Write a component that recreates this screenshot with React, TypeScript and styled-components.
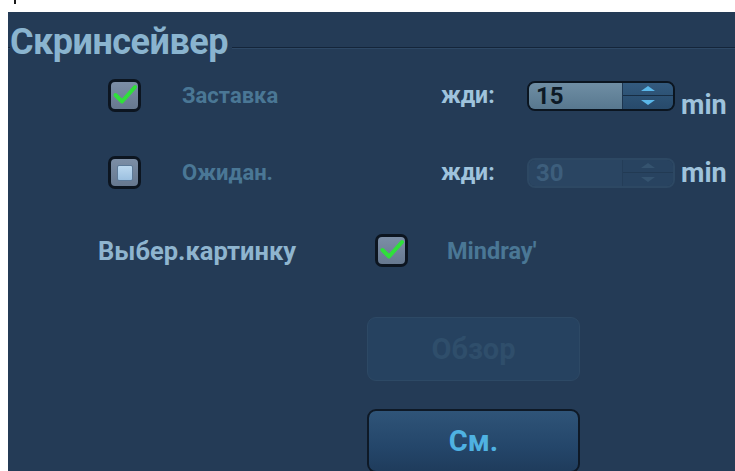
import React from "react";
import styled, { createGlobalStyle } from "styled-components";

const GlobalStyle = createGlobalStyle`
  html, body {
    margin: 0;
    padding: 0;
    background: #ffffff;
    overflow: hidden;
  }
  body {
    font-family: Roboto, "Liberation Sans", Arial, sans-serif;
  }
`;

const TopStrip = styled.div`
  height: 12px;
  padding-left: 14px;
`;

const Speck = styled.div`
  width: 2px;
  height: 4px;
  background: #1a1a1a;
`;

const Panel = styled.div`
  margin-left: 8px;
  height: 459px;
  background: #243b56;
  overflow: hidden;
  display: flex;
  flex-direction: column;
`;

const Header = styled.div`
  display: flex;
  align-items: flex-start;
  height: 34px;
  margin-top: 13px;
`;

const HeaderLine = styled.div<{ $grow?: boolean }>`
  height: 1px;
  width: 2px;
  flex: ${(p) => (p.$grow ? 1 : "none")};
  margin-top: 22px;
  background: #14253a;
  box-shadow: 0 1px 0 #2e4865;
`;

const Title = styled.div`
  font-size: 36px;
  font-weight: 700;
  letter-spacing: -0.5px;
  color: #8ab4cf;
  padding-right: 4px;
  line-height: 34px;
`;

const Row = styled.div<{ $top: number; $pad: number }>`
  display: flex;
  align-items: center;
  height: 34px;
  margin-top: ${(p) => p.$top}px;
  padding-left: ${(p) => p.$pad}px;
`;

const Box = styled.div`
  width: 27px;
  height: 27px;
  border: 3px solid #0c1520;
  border-radius: 7px;
  background: linear-gradient(#7c8ea6, #66788f);
  display: flex;
  align-items: center;
  justify-content: center;
  flex: none;
  position: relative;
`;

const BoxDot = styled.div`
  width: 14px;
  height: 14px;
  border-radius: 2px;
  border: 1px solid #5d7a98;
  background: linear-gradient(#bcd8ef, #9cc0e0);
`;

const Tick = styled.svg`
  position: absolute;
  left: 1px;
  top: 0px;
`;

const Label = styled.div<{ $w: number; $gap: number; $size?: number }>`
  width: ${(p) => p.$w}px;
  margin-left: ${(p) => p.$gap}px;
  font-size: ${(p) => p.$size ?? 22}px;
  font-weight: 700;
  color: #4a7795;
  flex: none;
`;

const Caption = styled.div<{ $w: number; $size: number; $tone?: string }>`
  width: ${(p) => p.$w}px;
  font-size: ${(p) => p.$size}px;
  font-weight: 700;
  color: ${(p) => p.$tone ?? "#9fc3dc"};
  flex: none;
  white-space: nowrap;
`;

const Spinner = styled.div<{ $off?: boolean }>`
  display: flex;
  width: 144px;
  height: 26px;
  border: 2px solid ${(p) => (p.$off ? "#2d4863" : "#0b1520")};
  border-radius: 8px;
  overflow: hidden;
  flex: none;
`;

const SpinValue = styled.div<{ $off?: boolean }>`
  flex: 1;
  padding-left: 7px;
  font-size: 24px;
  font-weight: 700;
  line-height: 26px;
  color: ${(p) => (p.$off ? "#3d5e7c" : "#0d1a26")};
  background: ${(p) =>
    p.$off ? "#2a4562" : "linear-gradient(#6f8ea4, #58788f)"};
  border-right: 1px solid ${(p) => (p.$off ? "#243d58" : "#1d3650")};
`;

const SpinArrows = styled.div<{ $off?: boolean }>`
  width: 50px;
  display: flex;
  flex-direction: column;
  background: ${(p) => (p.$off ? "#284360" : "linear-gradient(#335a7e, #274a6b)")};
`;

const Arrow = styled.div<{ $off?: boolean; $down?: boolean }>`
  flex: 1;
  display: flex;
  align-items: center;
  justify-content: center;
  border-top: ${(p) => (p.$down ? `1px solid ${p.$off ? "#223a53" : "#172d43"}` : "none")};
  &::after {
    content: "";
    border-left: 7px solid transparent;
    border-right: 7px solid transparent;
    ${(p) =>
      p.$down
        ? `border-top: 5px solid ${p.$off ? "#35536f" : "#5bb8ea"};`
        : `border-bottom: 5px solid ${p.$off ? "#35536f" : "#5bb8ea"};`}
  }
`;

const Unit = styled.div<{ $low?: boolean }>`
  margin-left: 6px;
  font-size: 27px;
  font-weight: 700;
  color: #9fc3dc;
  white-space: nowrap;
  align-self: ${(p) => (p.$low ? "flex-end" : "center")};
  margin-bottom: ${(p) => (p.$low ? "-9px" : "0")};
`;

const ButtonStack = styled.div`
  display: flex;
  flex-direction: column;
  gap: 28px;
  padding-left: 359px;
  margin-top: 50px;
`;

const Button = styled.div<{ $off?: boolean }>`
  width: 213px;
  height: 64px;
  box-sizing: border-box;
  border-radius: 9px;
  display: flex;
  align-items: center;
  justify-content: center;
  font-size: 29px;
  font-weight: 700;
  color: ${(p) => (p.$off ? "#2f4e6b" : "#4fb2e2")};
  border: ${(p) => (p.$off ? "1px solid #2d4965" : "2px solid #0e1926")};
  background: ${(p) =>
    p.$off ? "#264260" : "linear-gradient(#2f5478 0%, #24466a 60%, #1f3c5c 100%)"};
`;

const CheckBox = ({ checked }: { checked: boolean }) => (
  <Box>
    {checked ? (
      <Tick width="26" height="24" viewBox="0 0 26 24">
        <path
          d="M3.5 13 L10 19.5 L23 5"
          fill="none"
          stroke="#2fe03a"
          strokeWidth="4"
          strokeLinecap="round"
          strokeLinejoin="round"
        />
      </Tick>
    ) : (
      <BoxDot />
    )}
  </Box>
);

const WaitSpinner = ({ value, off }: { value: string; off?: boolean }) => (
  <Spinner $off={off}>
    <SpinValue $off={off}>{value}</SpinValue>
    <SpinArrows $off={off}>
      <Arrow $off={off} />
      <Arrow $off={off} $down />
    </SpinArrows>
  </Spinner>
);

export default function App() {
  return (
    <>
      <GlobalStyle />
      <TopStrip>
        <Speck />
      </TopStrip>
      <Panel>
        <Header>
          <HeaderLine />
          <Title>Скринсейвер</Title>
          <HeaderLine $grow />
        </Header>
        <Row $top={20} $pad={100}>
          <CheckBox checked />
          <Label $w={259} $gap={41}>Заставка</Label>
          <Caption $w={86} $size={23}>жди:</Caption>
          <WaitSpinner value="15" />
          <Unit $low>min</Unit>
        </Row>
        <Row $top={44} $pad={100}>
          <CheckBox checked={false} />
          <Label $w={259} $gap={41}>Ожидан.</Label>
          <Caption $w={86} $size={23}>жди:</Caption>
          <WaitSpinner value="30" off />
          <Unit>min</Unit>
        </Row>
        <Row $top={45} $pad={90}>
          <Caption $w={277} $size={25.5} $tone="#8fb5cf">
            Выбер.картинку
          </Caption>
          <CheckBox checked />
          <Label $w={160} $gap={39} $size={23.5}>
            Mindray'
          </Label>
        </Row>
        <ButtonStack>
          <Button $off>Обзор</Button>
          <Button>См.</Button>
        </ButtonStack>
      </Panel>
    </>
  );
}
